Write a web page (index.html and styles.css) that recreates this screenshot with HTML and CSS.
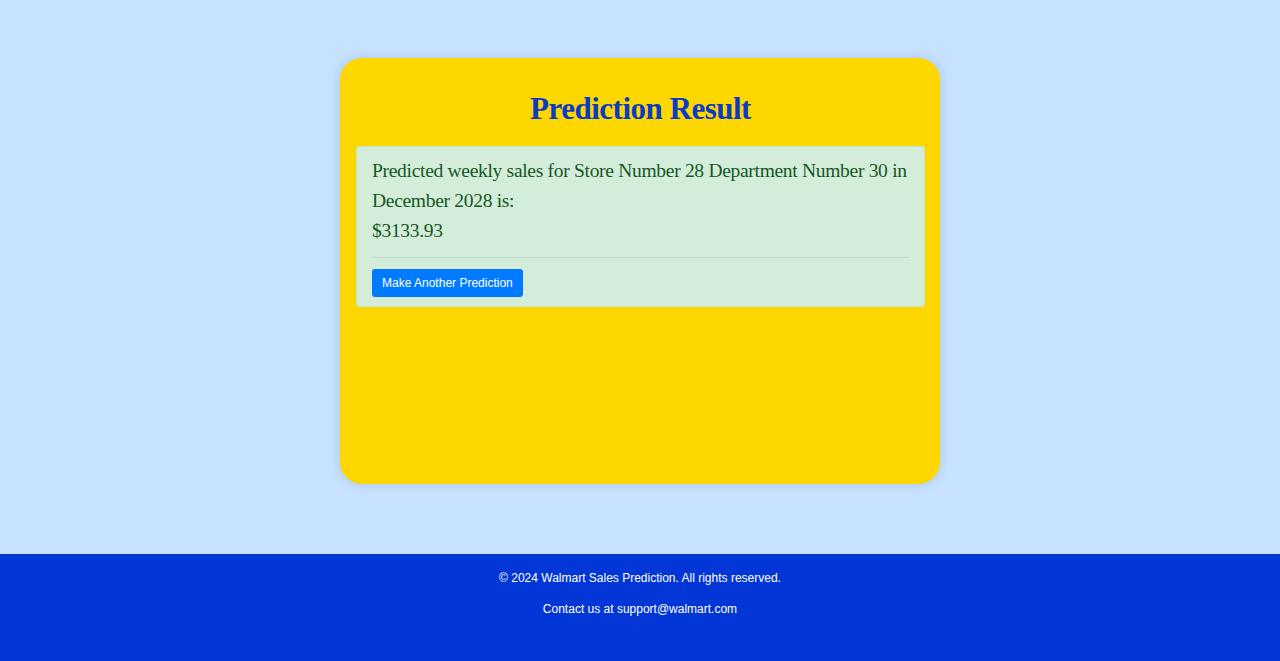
FILE: index.html
```html
<!DOCTYPE html>
<html lang="en">
<head>
<meta charset="utf-8">
<title>Prediction Result</title>
<link rel="stylesheet" href="styles.css">
</head>
<body>
<main class="page">
  <section class="card">
    <h1 class="title">Prediction Result</h1>
    <div class="alert">
      <p class="result">Predicted weekly sales for Store Number 28 Department Number 30 in December 2028 is:<br>$3133.93</p>
      <hr class="divider">
      <a class="btn" href="#">Make Another Prediction</a>
    </div>
  </section>
</main>
<footer class="footer">
  <p class="footer-line">© 2024 Walmart Sales Prediction. All rights reserved.</p>
  <p class="footer-line">Contact us at support@walmart.com</p>
</footer>
</body>
</html>
```
FILE: styles.css
```css
html, body {
  margin: 0;
  padding: 0;
}
body {
  background: #c6e2ff;
  font-family: "Liberation Serif", "Times New Roman", serif;
  height: 661px;
  display: flex;
  flex-direction: column;
}
.page {
  height: 554px;
  display: flex;
  justify-content: center;
  padding-top: 58px;
  box-sizing: border-box;
}
.card {
  width: 600px;
  height: 426px;
  box-sizing: border-box;
  background: #ffd700;
  border-radius: 22px;
  box-shadow: 0 0 12px rgba(0, 0, 0, 0.12);
  padding: 16px 15px 16px 16px;
}
.title {
  margin: 16px 0 18px;
  text-align: center;
  color: #0b3bc4;
  font-size: 31px;
  letter-spacing: -0.5px;
  font-weight: bold;
  line-height: 38px;
}
.alert {
  background: #d4edda;
  border: 1px solid #c3e6cb;
  border-radius: 3px;
  color: #155724;
  padding: 9px 15px 9px;
}
.result {
  margin: 0;
  font-size: 19.5px;
  letter-spacing: -0.3px;
  line-height: 30px;
}
.divider {
  border: 0;
  border-top: 1px solid rgba(0, 0, 0, 0.07);
  margin: 11px 0 11px;
}
.btn {
  display: inline-block;
  background: #007bff;
  color: #fff;
  font-family: "Liberation Sans", Arial, sans-serif;
  font-size: 12px;
  line-height: 28px;
  padding: 0 10px;
  border-radius: 3px;
  text-decoration: none;
}
.footer {
  height: 107px;
  background: #0336d6;
  color: #fff;
  text-align: center;
  font-family: "Liberation Sans", Arial, sans-serif;
  font-size: 12px;
  padding-top: 17px;
  box-sizing: border-box;
}
.footer-line {
  margin: 0 0 17px;
  line-height: 14px;
}
```
